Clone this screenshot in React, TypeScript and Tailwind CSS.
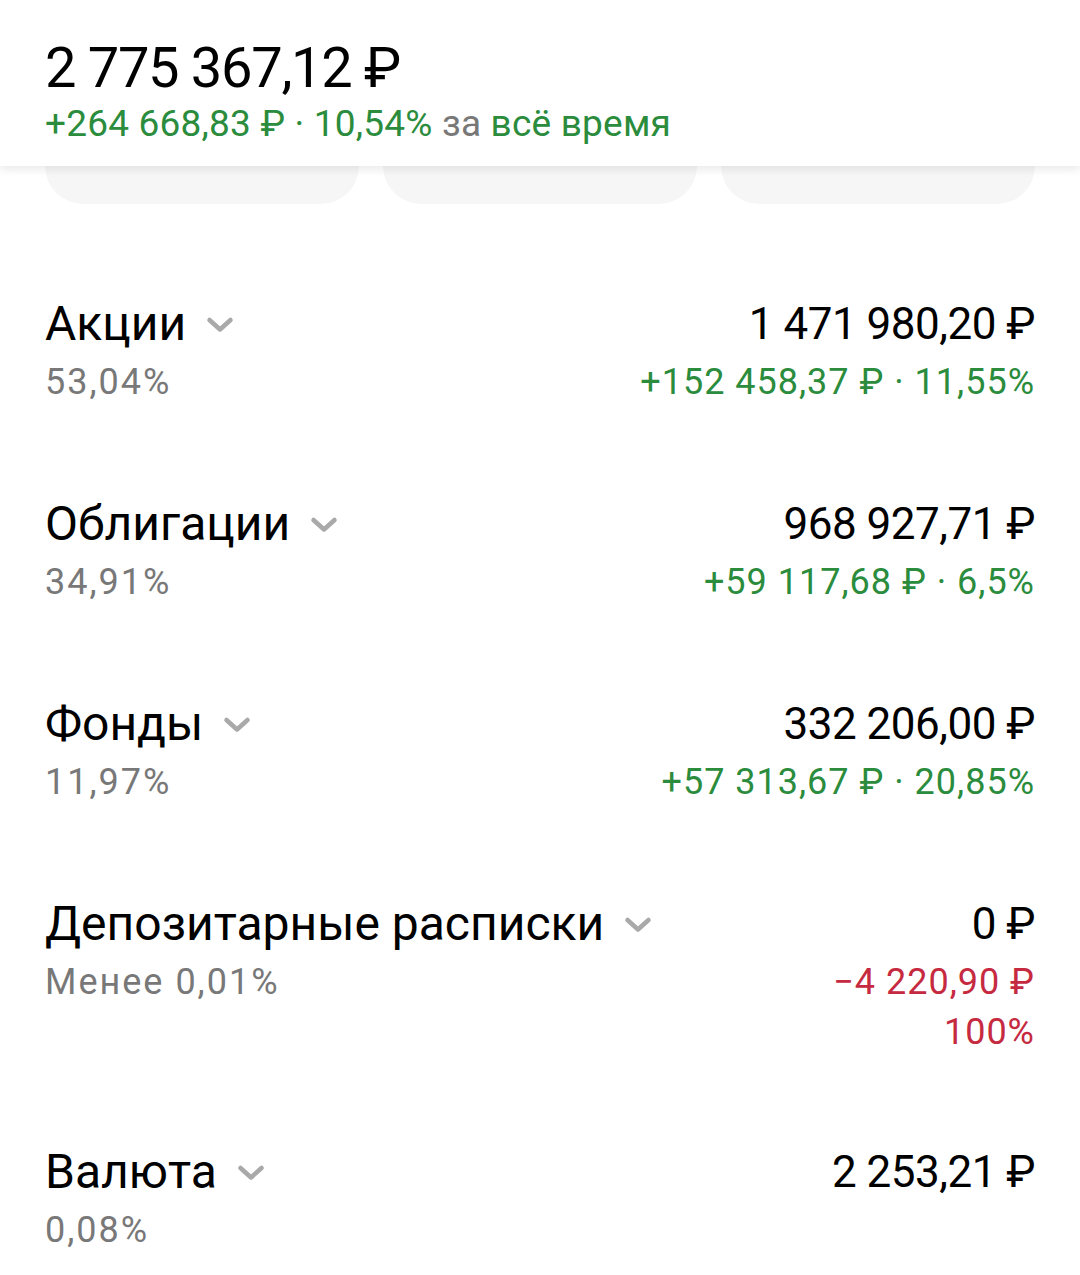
import React from "react";

const green = "text-[#2a8c3c]";

function Chevron() {
  return (
    <svg width="30" height="20" viewBox="0 0 30 20" className="ml-[19px] mt-[2px]">
      <path d="M4.5 5 L15 14.5 L25.5 5" fill="none" stroke="#a9a9a9" strokeWidth="4.5" strokeLinecap="round" strokeLinejoin="round" />
    </svg>
  );
}

type Row = { name: string; pct: string; amount: string; lines: { text: string; color: string }[] };

const rows: Row[] = [
  { name: "Акции", pct: "53,04%", amount: "1 471 980,20 ₽", lines: [{ text: "+152 458,37 ₽ · 11,55%", color: green }] },
  { name: "Облигации", pct: "34,91%", amount: "968 927,71 ₽", lines: [{ text: "+59 117,68 ₽ · 6,5%", color: green }] },
  { name: "Фонды", pct: "11,97%", amount: "332 206,00 ₽", lines: [{ text: "+57 313,67 ₽ · 20,85%", color: green }] },
  {
    name: "Депозитарные расписки",
    pct: "Менее 0,01%",
    amount: "0 ₽",
    lines: [
      { text: "−4 220,90 ₽", color: "text-[#c62a40]" },
      { text: "100%", color: "text-[#c62a40]" },
    ],
  },
  { name: "Валюта", pct: "0,08%", amount: "2 253,21 ₽", lines: [] },
];

export default function App() {
  return (
    <div className="w-[1080px] h-[1275px] bg-white overflow-hidden" style={{ fontFamily: "Roboto, 'Noto Sans', sans-serif" }}>
      <div className="relative z-10 bg-white h-[166px] px-[45px] pt-[37px] shadow-[0_4px_8px_rgba(0,0,0,0.08)]">
        <div className="text-[56px] leading-[62px] text-black tracking-[-1.3px]">2 775 367,12 ₽</div>
        <div className="text-[37px] leading-[42px] mt-[4px] text-[#2a8c3c] tracking-[0.2px]">
          +264 668,83 ₽ · 10,54% <span className="text-[#787878]">за</span> всё время
        </div>
      </div>
      <div className="flex gap-[24px] px-[45px]">
        <div className="h-[38px] flex-1 bg-[#f6f6f6] rounded-b-[40px]" />
        <div className="h-[38px] flex-1 bg-[#f6f6f6] rounded-b-[40px]" />
        <div className="h-[38px] flex-1 bg-[#f6f6f6] rounded-b-[40px]" />
      </div>
      <div className="px-[45px] pt-[91px] flex flex-col gap-[88px]">
        {rows.map((r) => (
          <div key={r.name} className="flex justify-between">
            <div>
              <div className="flex items-center h-[58px] text-[48px] text-black">
                {r.name}
                <Chevron />
              </div>
              <div className="h-[50px] mt-[4px] flex items-center text-[36px] tracking-[2px] text-[#787878]">{r.pct}</div>
            </div>
            <div className="flex flex-col items-end">
              <div className="flex items-center h-[58px] text-[44px] tracking-[-0.5px] text-black">{r.amount}</div>
              {r.lines.map((l, i) => (
                <div
                  key={l.text}
                  className={`${i === 0 ? "h-[50px] mt-[4px]" : "h-[46px] mt-[2px]"} flex items-center text-[36px] tracking-[1px] ${l.color}`}
                >
                  {l.text}
                </div>
              ))}
            </div>
          </div>
        ))}
      </div>
    </div>
  );
}
